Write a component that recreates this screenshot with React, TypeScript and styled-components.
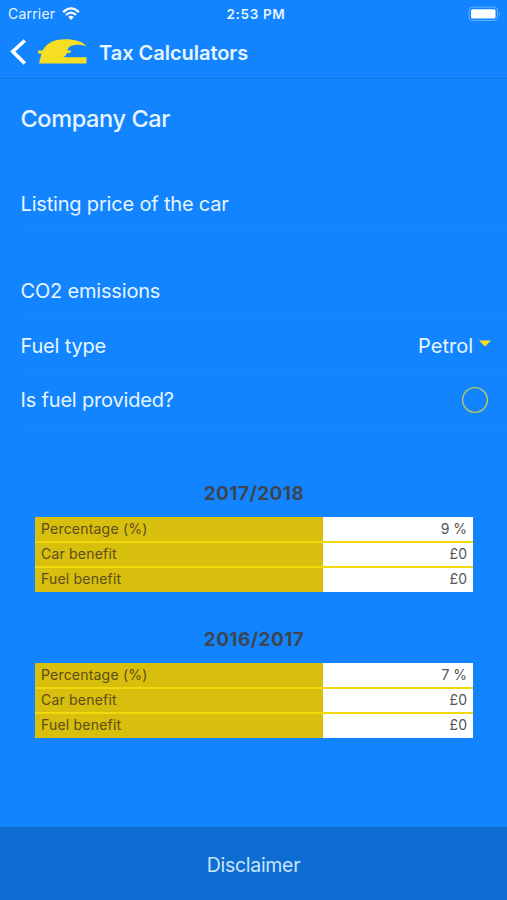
import React from 'react';
import styled, { createGlobalStyle } from 'styled-components';

const GlobalStyle = createGlobalStyle`
  * { box-sizing: border-box; }
  body { margin: 0; background: #1384ff; }
`;

const Screen = styled.div`
  width: 507px;
  height: 900px;
  display: flex;
  flex-direction: column;
  overflow: hidden;
  background: #1384ff;
  color: #e6f5ff;
  font-family: Inter, "Liberation Sans", sans-serif;
`;

const StatusBar = styled.div`
  height: 27px;
  padding: 0 6px 0 8px;
  display: grid;
  grid-template-columns: 1fr auto 1fr;
  align-items: center;
`;

const Carrier = styled.div`
  display: flex;
  align-items: center;
  gap: 7px;
  font-size: 14px;
  letter-spacing: 0.2px;
`;

const Clock = styled.div`
  padding-left: 3px;
  font-size: 13.5px;
  font-weight: 600;
  letter-spacing: 0.65px;
`;

const Battery = styled.svg`
  justify-self: end;
`;

const NavBar = styled.header`
  height: 52px;
  padding-left: 10px;
  display: flex;
  align-items: center;
  border-bottom: 1px solid #1076e3;
`;

const BackButton = styled.button`
  display: flex;
  padding: 0;
  border: 0;
  background: none;
`;

const Logo = styled.svg`
  margin: 0 12px 0 11px;
`;

const NavTitle = styled.h1`
  margin: 0;
  font-size: 20px;
  font-weight: 600;
  letter-spacing: -0.03px;
`;

const Content = styled.main`
  flex: 1;
`;

const PageTitle = styled.h2`
  height: 98px;
  margin: 0;
  padding: 24px 0 0 20.5px;
  font-size: 23.5px;
  line-height: 32px;
  font-weight: 450;
  letter-spacing: -0.38px;
`;

const Row = styled.div<{ $gap?: number; $drop?: number }>`
  height: 54px;
  margin: ${p => p.$gap ?? 0}px 0 0 20px;
  padding: ${p => p.$drop ?? 1}px 16px 0 0.5px;
  display: flex;
  align-items: center;
  justify-content: space-between;
  border-bottom: 1px solid #1b89fb;
  font-size: 20px;
  letter-spacing: -0.18px;
`;

const Choice = styled.span`
  display: flex;
  align-items: center;
  gap: 6px;
  letter-spacing: 0;
`;

const Caret = styled.svg`
  margin-top: -4px;
`;

const Radio = styled.svg`
  margin-right: 2px;
`;

const Results = styled.section<{ $top: number }>`
  margin: ${p => p.$top}px 34px 0 35px;
`;

const Year = styled.h3`
  margin: 0;
  height: 38px;
  padding-top: 1px;
  line-height: 28px;
  text-align: center;
  color: #3c4651;
  font-size: 19px;
  font-weight: 700;
  letter-spacing: 0.42px;
`;

const Table = styled.div`
  height: 75px;
  display: grid;
  grid-template-rows: 24px 23px 24px;
  row-gap: 2px;
  background: #f2d90d;
`;

const TableRow = styled.div`
  display: grid;
  grid-template-columns: 288px 1fr;
  font-size: 14px;
  line-height: 23px;

  & + & { line-height: 21px; }
`;

const Label = styled.div`
  padding-left: 6px;
  background: #d8be0d;
  color: #5c4d1c;
  letter-spacing: 0.2px;
`;

const Value = styled.div`
  padding-right: 6px;
  background: #fff;
  color: #555;
  text-align: right;
`;

const Footer = styled.footer`
  height: 73px;
  display: flex;
  align-items: center;
  justify-content: center;
  padding-top: 2px;
  border-top: 1px solid #1065bd;
  background: #0e6dd3;
  color: #c9e4fa;
  font-size: 19.5px;
  letter-spacing: -0.3px;
`;

const years = [
  { year: '2017/2018', percentage: '9 %', top: 53 },
  { year: '2016/2017', percentage: '7 %', top: 33 },
];

export default function App() {
  return (
    <>
      <GlobalStyle />
      <Screen>
        <StatusBar>
          <Carrier>
            <span>Carrier</span>
            <svg width="18" height="14" viewBox="0 0 18 14" fill="none" stroke="#fff" strokeWidth="2.2">
              <path d="M1.2 5.1Q9-2.5 16.8 5.1" />
              <path d="M4 8Q9 3.2 14 8" />
              <path d="M6.3 10Q9 7.6 11.7 10L9 13Z" fill="#fff" stroke="none" />
            </svg>
          </Carrier>
          <Clock>2:53 PM</Clock>
          <Battery width="33" height="16" viewBox="0 0 33 16">
            <rect x="1" y="1.2" width="28.5" height="13.3" rx="3.5" fill="none" stroke="#62b0ff" />
            <rect x="3" y="3.2" width="24.5" height="9.3" rx="1.5" fill="#fff" />
            <path d="M31 5.5q2 2.5 0 5z" fill="#62b0ff" />
          </Battery>
        </StatusBar>
        <NavBar>
          <BackButton aria-label="Back">
            <svg width="17" height="28" viewBox="0 0 17 28" fill="none" stroke="#fff" strokeWidth="3.6">
              <path d="M14.8 1.5L2.8 12.5L14.8 24.5" />
            </svg>
          </BackButton>
          <Logo width="49" height="28" viewBox="0 0 49 28">
            <path d="M0 11.5H4.5C9 4 16 .2 27 .2C37 .2 45 2.5 48.3 7.2C41 4.8 34 5.4 31 8.2C29.8 9.3 29.3 10.6 29.8 11.4H33.3L32 14H29Q28 17 25 18.3H48.5V24.5H1L3.5 14.5H0Z" fill="#f6df22" />
          </Logo>
          <NavTitle>Tax Calculators</NavTitle>
        </NavBar>
        <Content>
          <PageTitle>Company Car</PageTitle>
          <Row>Listing price of the car</Row>
          <Row $gap={33}>CO2 emissions</Row>
          <Row $drop={2}>
            Fuel type
            <Choice>
              Petrol
              <Caret width="12" height="7" viewBox="0 0 12 7">
                <path d="M0 .5H12L6 6.5Z" fill="#ffe01c" />
              </Caret>
            </Choice>
          </Row>
          <Row $drop={2}>
            Is fuel provided?
            <Radio width="28" height="28" viewBox="0 0 28 28" role="radio" aria-checked="false">
              <circle cx="14" cy="14" r="12.4" fill="none" stroke="#b5ca62" strokeWidth="1.4" />
            </Radio>
          </Row>
          {years.map(item => (
            <Results key={item.year} $top={item.top}>
              <Year>{item.year}</Year>
              <Table>
                <TableRow><Label>Percentage (%)</Label><Value>{item.percentage}</Value></TableRow>
                <TableRow><Label>Car benefit</Label><Value>£0</Value></TableRow>
                <TableRow><Label>Fuel benefit</Label><Value>£0</Value></TableRow>
              </Table>
            </Results>
          ))}
        </Content>
        <Footer>Disclaimer</Footer>
      </Screen>
    </>
  );
}
